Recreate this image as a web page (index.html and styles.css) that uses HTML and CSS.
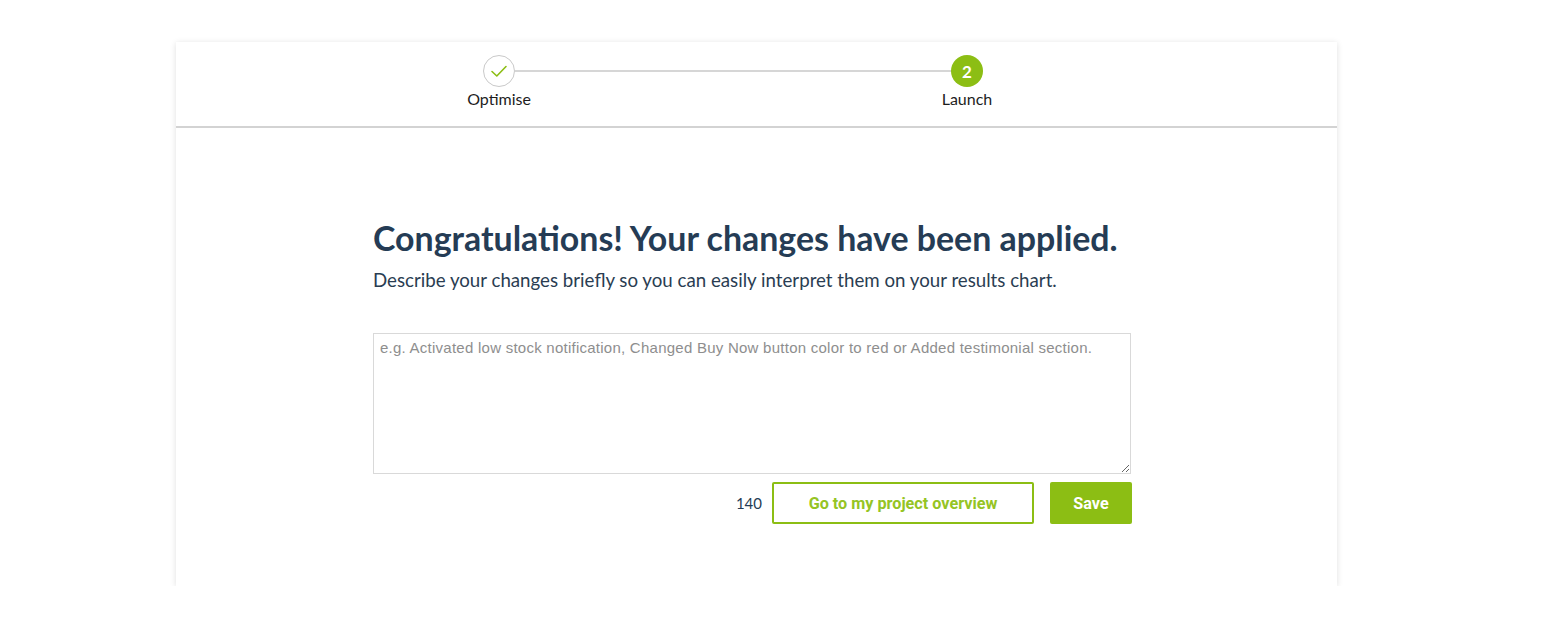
FILE: index.html
```html
<!DOCTYPE html>
<html lang="en">
<head>
  <meta charset="UTF-8" />
  <title>Launch</title>
  <link rel="stylesheet" href="styles.css">
</head>
<body>
  <div class="card">
    <div class="steps">
      <div class="step">
        <div class="dot done">
          <svg width="18" height="14" viewBox="0 0 18 14"><path d="M2 7.5 L6.8 12 L16 2.5" fill="none" stroke="#8cbe14" stroke-width="1.6" stroke-linecap="round" stroke-linejoin="round"/></svg>
        </div>
        <span class="label">Optimise</span>
      </div>
      <div class="line"></div>
      <div class="step">
        <div class="dot active">2</div>
        <span class="label">Launch</span>
      </div>
    </div>

    <div class="content">
      <h1>Congratulations! Your changes have been applied.</h1>
      <p class="lead">Describe your changes briefly so you can easily interpret them on your results chart.</p>
      <textarea maxlength="140" placeholder="e.g. Activated low stock notification, Changed Buy Now button color to red or Added testimonial section."></textarea>
      <div class="actions">
        <span class="count">140</span>
        <button class="btn outline">Go to my project overview</button>
        <button class="btn primary">Save</button>
      </div>
    </div>
  </div>
</body>
</html>
```

FILE: styles.css
```css
body {
  margin: 0;
  background: #fff;
  font-family: Lato, "Open Sans", sans-serif;
  color: #253c55;
}

.card {
  width: 1161px;
  height: 544px;
  margin: 42px 0 0 176px;
  background: #fff;
  box-shadow: 0 1px 6px rgba(0, 0, 0, 0.13);
}

.steps {
  display: flex;
  align-items: flex-start;
  height: 86px;
  padding: 13px 0 0 283px;
  box-sizing: border-box;
  border-bottom: 2px solid #d3d3d3;
}

.step {
  width: 80px;
  display: flex;
  flex-direction: column;
  align-items: center;
  position: relative;
  z-index: 1;
}

.dot {
  width: 32px;
  height: 32px;
  border-radius: 50%;
  box-sizing: border-box;
  display: flex;
  align-items: center;
  justify-content: center;
  background: #fff;
}

.dot.done {
  border: 1.5px solid #c9c9c9;
}

.dot.active {
  background: #8cbe14;
  color: #fff;
  font-weight: 700;
  font-size: 17px;
}

.label {
  margin-top: 2px;
  font-size: 16px;
  color: #1d1d1d;
}

.line {
  flex: none;
  width: 436px;
  height: 2px;
  margin: 15px -24px 0;
  background: #d6d6d6;
}

.content {
  width: 760px;
  padding: 90px 0 0 197px;
}

h1 {
  margin: 0;
  font-size: 33.9px;
  font-weight: 700;
  color: #253c55;
}

.lead {
  margin: 11px 0 0;
  font-size: 18.7px;
  color: #2a3d52;
}

textarea {
  display: block;
  width: 758px;
  height: 141px;
  margin-top: 42px;
  padding: 5px 6px;
  box-sizing: border-box;
  border: 1px solid #d9d9d9;
  font-family: "Liberation Sans", Arial, sans-serif;
  font-size: 15px;
  letter-spacing: 0.25px;
  resize: vertical;
}

textarea::placeholder {
  color: #8e8e8e;
}

.actions {
  display: flex;
  justify-content: flex-end;
  align-items: center;
  gap: 10px;
  margin-top: 8px;
}

.count {
  font-size: 15px;
  color: #253c55;
}

.btn {
  height: 42px;
  font-family: Roboto, sans-serif;
  font-weight: 700;
  font-size: 16.2px;
  border-radius: 2px;
  cursor: pointer;
}

.btn.outline {
  width: 262px;
  background: #fff;
  border: 2px solid #8cbe14;
  color: #95c424;
  margin-right: 6px;
}

.btn.primary {
  width: 82px;
  background: #8cbe14;
  border: 0;
  color: #fff;
  margin-right: 1px;
}
```
